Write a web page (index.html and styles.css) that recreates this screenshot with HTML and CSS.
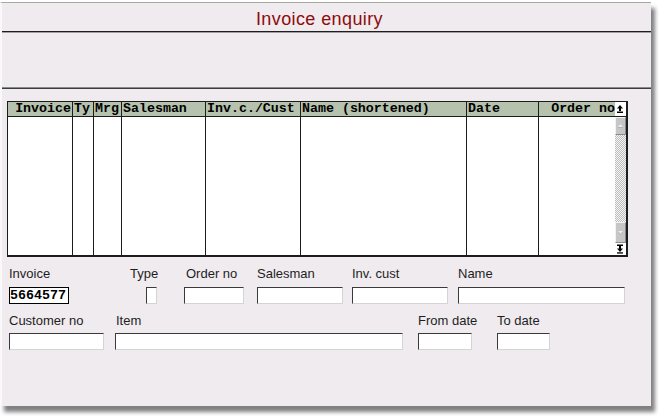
FILE: index.html
```html
<!DOCTYPE html>
<html>
<head>
<meta charset="utf-8">
<link rel="stylesheet" href="styles.css">
</head>
<body>
<div class="window">
  <div class="title">Invoice enquiry</div>
  <div class="rule rule-top"></div>
  <div class="rule rule-mid"></div>

  <div class="grid">
    <div class="col c-inv"><div class="col-head right">Invoice</div><div class="col-body"></div></div>
    <div class="col c-ty"><div class="col-head">Ty</div><div class="col-body"></div></div>
    <div class="col c-mrg"><div class="col-head">Mrg</div><div class="col-body"></div></div>
    <div class="col c-sales"><div class="col-head">Salesman</div><div class="col-body"></div></div>
    <div class="col c-cust"><div class="col-head">Inv.c./Cust</div><div class="col-body"></div></div>
    <div class="col c-name"><div class="col-head">Name (shortened)</div><div class="col-body"></div></div>
    <div class="col c-date"><div class="col-head">Date</div><div class="col-body"></div></div>
    <div class="col c-order"><div class="col-head right">Order no</div><div class="col-body"></div></div>
    <div class="scroll">
      <div class="sb-top">
        <svg width="10" height="14" viewBox="0 0 10 14"><polygon points="5,3 2,6.5 8,6.5" fill="#000"/><rect x="4" y="6" width="2" height="3" fill="#000"/><rect x="2" y="9.5" width="6" height="1.5" fill="#000"/></svg>
      </div>
      <div class="sb-btn sb-up">
        <svg width="9" height="16" viewBox="0 0 9 16"><polygon points="4.5,6.5 2,9.5 7,9.5" fill="#9a9a9a"/><polygon points="4.5,6 2,9 7,9" fill="#eeeeee"/></svg>
      </div>
      <div class="sb-track"></div>
      <div class="sb-btn sb-down">
        <svg width="9" height="19" viewBox="0 0 9 19"><polygon points="2,8.5 7,8.5 4.5,11.5" fill="#9a9a9a"/><polygon points="2,8 7,8 4.5,11" fill="#eeeeee"/></svg>
      </div>
      <div class="sb-bottom">
        <svg width="10" height="12" viewBox="0 0 10 12"><rect x="2" y="1.5" width="6" height="1.5" fill="#000"/><rect x="4" y="3" width="2" height="3" fill="#000"/><polygon points="2,5.5 8,5.5 5,9" fill="#000"/><rect x="2" y="9.3" width="6" height="1.3" fill="#000"/></svg>
      </div>
    </div>
  </div>

  <div class="form">
    <div class="row row-1">
      <div class="field f-invoice"><div class="lbl">Invoice</div><div class="box box-active">5664577</div></div>
      <div class="field f-type"><div class="lbl">Type</div><div class="box check"></div></div>
      <div class="field f-order"><div class="lbl lbl-shift2">Order no</div><div class="box"></div></div>
      <div class="field f-sales"><div class="lbl">Salesman</div><div class="box"></div></div>
      <div class="field f-invcust"><div class="lbl">Inv. cust</div><div class="box"></div></div>
      <div class="field f-name"><div class="lbl">Name</div><div class="box"></div></div>
    </div>
    <div class="row row-2">
      <div class="field f-custno"><div class="lbl">Customer no</div><div class="box"></div></div>
      <div class="field f-item"><div class="lbl lbl-shift1">Item</div><div class="box"></div></div>
      <div class="field f-from"><div class="lbl">From date</div><div class="box"></div></div>
      <div class="field f-to"><div class="lbl">To date</div><div class="box"></div></div>
    </div>
  </div>
</div>
</body>
</html>
```
FILE: styles.css
```css
* { box-sizing: border-box; }
html, body { margin: 0; padding: 0; background: #ffffff; }
body {
  width: 659px;
  height: 416px;
  overflow: hidden;
  font-family: "Liberation Sans", Arial, sans-serif;
}

.window {
  margin-top: 2px;
  width: 651px;
  height: 404px;
  background: #efebef;
  border-top: 1px solid #a6aa9e;
  border-left: 2px solid #f9f9f9;
  box-shadow: 4px 6px 4px rgba(0, 0, 0, 0.5);
  display: flex;
  flex-direction: column;
}

.title {
  height: 28px;
  padding-top: 5px;
  padding-right: 14px;
  line-height: 22px;
  text-align: center;
  font-size: 18px;
  letter-spacing: 0.4px;
  color: #8e0c0c;
}

.rule { height: 2px; flex: none; }
.rule-top { border-top: 1px solid #1e1e1e; border-bottom: 1px solid #a0a0a0; }
.rule-mid { margin-top: 54px; border-top: 1px solid #8a8a8a; border-bottom: 1px solid #3c3c3c; }

/* list grid */
.grid {
  margin-top: 12px;
  margin-left: 5px;
  width: 621px;
  height: 156px;
  flex: none;
  display: flex;
  border: 1px solid #1c1c1c;
  border-right-width: 2px;
  border-bottom-width: 2px;
}
.col {
  display: flex;
  flex-direction: column;
  border-right: 1px solid #1c1c1c;
  flex: none;
}
.col-head {
  height: 15px;
  background: #b6c2ae;
  border-bottom: 1px solid #1c1c1c;
  font-family: "Liberation Mono", "DejaVu Sans Mono", monospace;
  font-weight: bold;
  font-size: 13.3px;
  line-height: 14px;
  color: #000;
  white-space: nowrap;
  overflow: hidden;
  padding-left: 1px;
}
.col-head.right { text-align: right; padding-left: 0; padding-right: 1px; }
.col-body { flex: 1; background: #ffffff; }

.c-inv { width: 65px; }
.c-ty { width: 21px; }
.c-mrg { width: 28px; }
.c-sales { width: 84px; }
.c-cust { width: 95px; }
.c-name { width: 166px; }
.c-date { width: 72px; }
.c-order { width: 76px; border-right: none; }
.c-order .col-head.right { padding-right: 0; }

.scroll {
  width: 11px;
  flex: none;
  display: flex;
  flex-direction: column;
  background: #ffffff;
}
.scroll svg { display: block; }
.sb-top {
  height: 15px;
  background: #ffffff;
  border-bottom: 1px solid #1c1c1c;
}
.sb-btn {
  background: #c6c6c6;
  border-top: 1px solid #f2f2f2;
  border-left: 1px solid #f2f2f2;
  border-right: 1px solid #8a8a8a;
  border-bottom: 1px solid #8a8a8a;
}
.sb-up { height: 18px; }
.sb-down { height: 21px; }
.sb-track {
  flex: 1;
  background: repeating-conic-gradient(#bdbdbd 0 25%, #f4f4f4 0 50%) 0 0 / 2px 2px;
}
.sb-bottom {
  height: 12px;
  background: #ffffff;
}

/* form */
.form { padding-left: 7px; }
.row { display: flex; align-items: flex-start; }
.row-1 { margin-top: 9px; }
.row-2 { margin-top: 9px; }
.field { display: flex; flex-direction: column; flex: none; }
.lbl {
  height: 15px;
  font-size: 13px;
  line-height: 15px;
  color: #1e1e1e;
  white-space: nowrap;
}
.lbl-shift1 { padding-left: 1px; }
.lbl-shift2 { padding-left: 2px; }
.box {
  margin-top: 6px;
  height: 17px;
  background: #ffffff;
  border: 1px solid;
  border-color: #3a3a3a #d4d4d4 #d4d4d4 #3a3a3a;
}
.row-2 .box { margin-top: 5px; }
.box-active {
  border-color: #000;
  font-family: "Liberation Mono", "DejaVu Sans Mono", monospace;
  font-weight: bold;
  font-size: 13.3px;
  line-height: 15px;
  padding-left: 0;
  color: #000;
}
.check { width: 11px; margin-left: 16px; }

.f-invoice { width: 60px; }
.f-type { width: 31px; margin-left: 61px; }
.f-order { width: 60px; margin-left: 23px; }
.f-sales { width: 86px; margin-left: 13px; }
.f-invcust { width: 96px; margin-left: 9px; }
.f-name { width: 167px; margin-left: 10px; }

.f-custno { width: 95px; }
.f-item { width: 288px; margin-left: 11px; }
.f-from { width: 54px; margin-left: 15px; }
.f-to { width: 53px; margin-left: 25px; }
```
